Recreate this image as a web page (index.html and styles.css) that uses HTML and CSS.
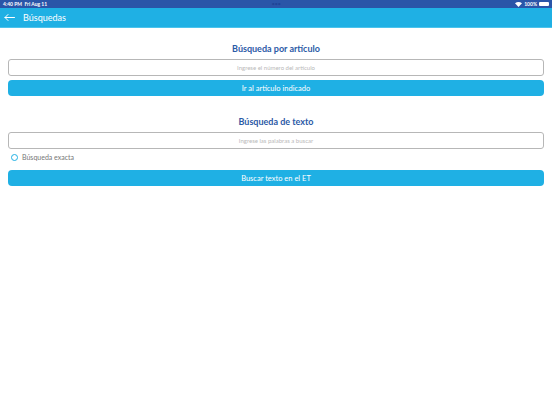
FILE: index.html
```html
<!DOCTYPE html>
<html lang="es">
<head>
<meta charset="utf-8">
<title>Búsquedas</title>
<link rel="stylesheet" href="styles.css">
</head>
<body>
<div class="status">
  <span class="time">4:40 PM&nbsp;&nbsp;Fri Aug 11</span>
  <span class="dots">•••</span>
  <span class="right">
    <svg class="wifi" width="7" height="5" viewBox="0 0 14 10"><path d="M7 10 L0 2.5 Q7 -2.5 14 2.5 Z" fill="#fff"/></svg>
    <span class="pct">100%</span>
    <span class="battery"></span>
  </span>
</div>
<div class="nav">
  <svg class="back" width="11" height="7" viewBox="0 0 22 14"><path d="M21 7 H2 M8 1 L2 7 L8 13" fill="none" stroke="#fff" stroke-width="2" stroke-linecap="round" stroke-linejoin="round"/></svg>
  <span class="navtitle">Búsquedas</span>
</div>
<main class="content">
  <h2 class="title t1">Búsqueda por artículo</h2>
  <div class="input"><span>Ingrese el número del artículo</span></div>
  <div class="btn">Ir al artículo indicado</div>

  <h2 class="title t2">Búsqueda de texto</h2>
  <div class="input"><span>Ingrese las palabras a buscar</span></div>
  <div class="radio-row"><span class="radio"></span><span class="radio-label">Búsqueda exacta</span></div>
  <div class="btn btn2">Buscar texto en el ET</div>
</main>
</body>
</html>
```
FILE: styles.css
```css
html, body {
  margin: 0;
  padding: 0;
  background: #ffffff;
  font-family: Lato, "Noto Sans", "Liberation Sans", sans-serif;
}
.status {
  height: 8px;
  background: #2a55a8;
  color: #fff;
  font-size: 5px;
  line-height: 8px;
  display: flex;
  align-items: center;
  justify-content: space-between;
  padding: 0 3px;
  position: relative;
}
.time { font-weight: 700; }
.dots {
  position: absolute;
  left: 50%;
  transform: translateX(-50%);
  color: #1f4597;
  font-size: 6px;
  letter-spacing: -0.5px;
}
.right { display: flex; align-items: center; gap: 2px; }
.pct { font-weight: 700; }
.battery {
  width: 10px;
  height: 4px;
  border-radius: 1px;
  background: #fff;
  display: inline-block;
}
.nav {
  height: 19px;
  background: #1fb0e4;
  border-bottom: 1px solid #4cc3ec;
  display: flex;
  align-items: center;
  padding-left: 4px;
  gap: 8px;
}
.back { display: block; }
.navtitle {
  color: #fff;
  font-size: 9px;
  line-height: 10px;
}
.content {
  padding: 0 8px;
  display: flex;
  flex-direction: column;
}
.title {
  margin: 0;
  text-align: center;
  color: #2b5aa6;
  font-size: 9px;
  font-weight: 700;
  line-height: 12px;
  height: 12px;
}
.t1 { margin-top: 15px; }
.t2 { margin-top: 20px; }
.input {
  margin-top: 4px;
  height: 15px;
  border: 1px solid #b7b7b7;
  border-radius: 3px;
  display: flex;
  align-items: center;
  justify-content: center;
  font-size: 6px;
  color: #b9b9b9;
}
.btn {
  margin-top: 4px;
  height: 16px;
  border-radius: 4px;
  background: #1fb0e4;
  color: #fff;
  font-size: 7.5px;
  display: flex;
  align-items: center;
  justify-content: center;
}
.radio-row {
  margin-top: 3px;
  height: 10px;
  display: flex;
  align-items: center;
  padding-left: 3px;
  gap: 4px;
}
.radio {
  width: 5px;
  height: 5px;
  border: 1.2px solid #1fb0e4;
  border-radius: 50%;
}
.radio-label {
  font-size: 7px;
  color: #777;
}
.btn2 { margin-top: 8px; }
```
